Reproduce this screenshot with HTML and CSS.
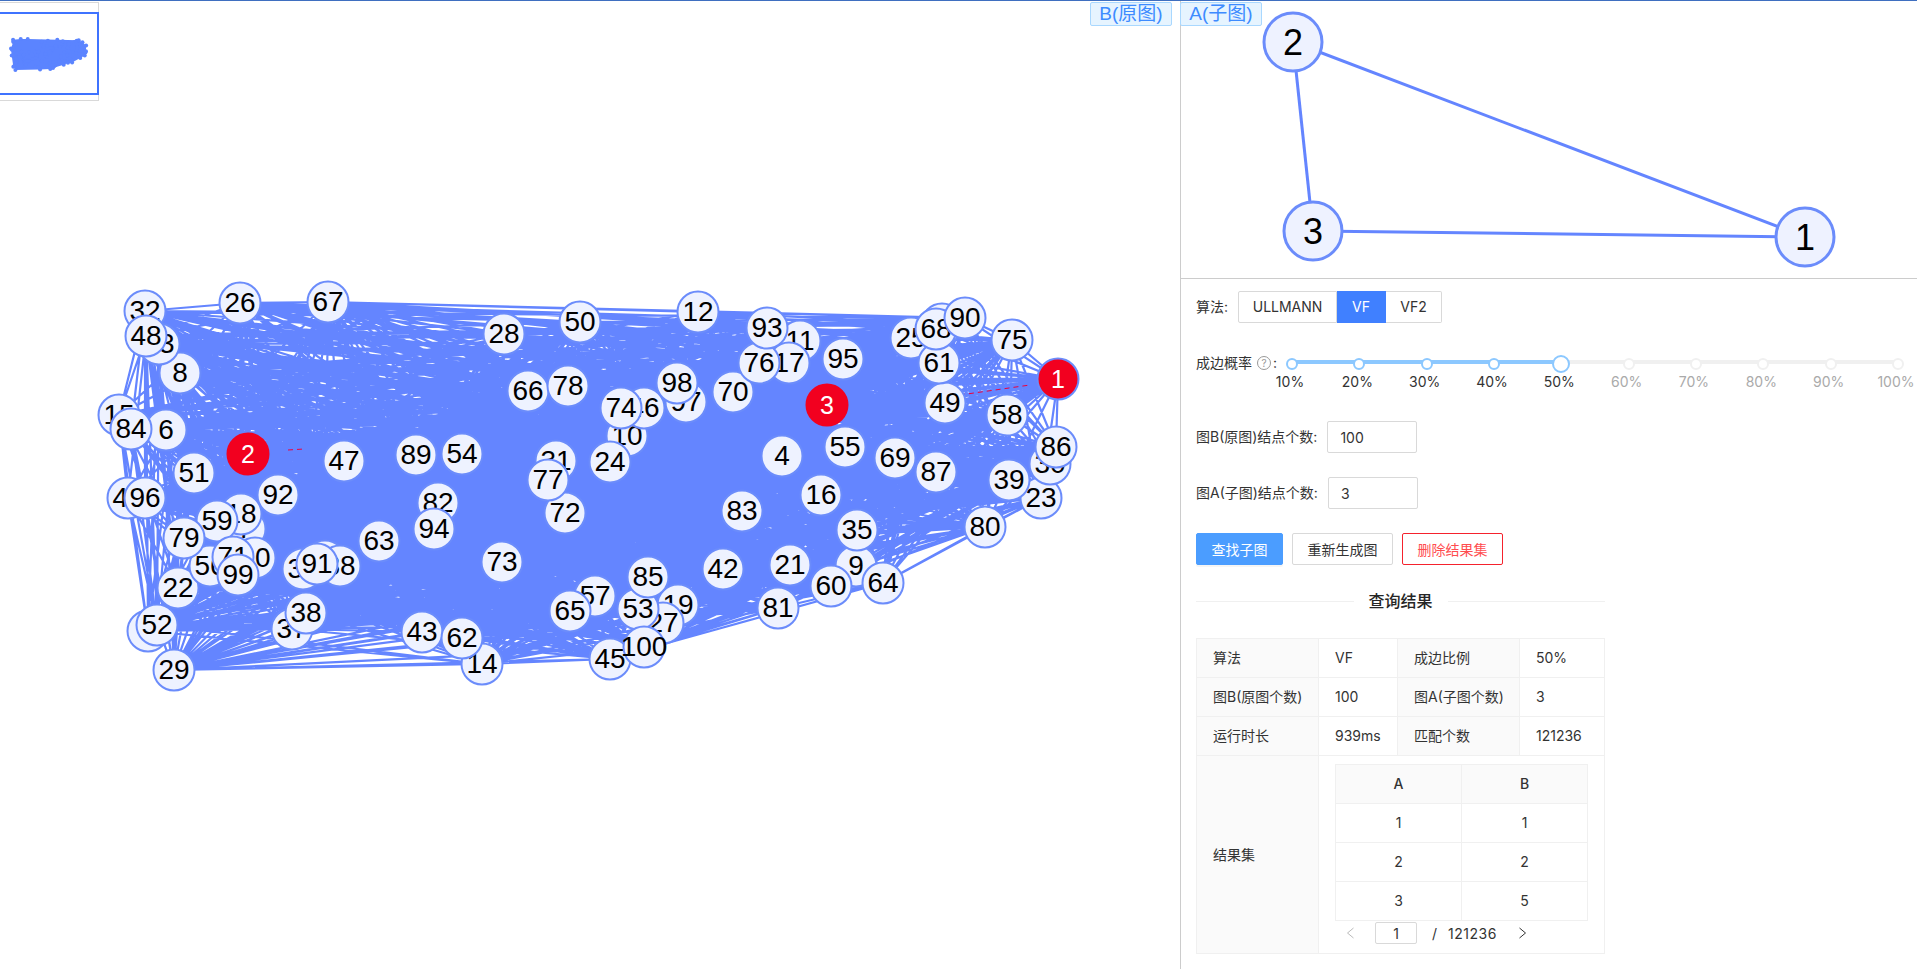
FILE: index.html
```html
<!DOCTYPE html>
<html lang="zh">
<head>
    <meta charset="UTF-8">
    <title>子图匹配</title>
    <link rel="stylesheet" href="styles.css">
</head>
<body>
    <div class="graph-pane">
        <div class="minimap">
            <svg id="minimapSvg" class="minimap-svg" width="98" height="98"></svg>
            <div class="minimap-view"></div>
        </div>
        <svg id="mainGraph" class="main-graph" width="1180" height="968"></svg>
        <div class="tabs">
            <span class="tab">B(原图)</span>
        </div>
    </div>
    <div class="side-pane">
        <div class="sub-graph">
            <span class="tab tab-sub">A(子图)</span>
            <svg class="sub-svg" width="736" height="277">
                <line class="sub-edge" x1="112" y1="41" x2="624" y2="236"/>
                <line class="sub-edge" x1="112" y1="41" x2="132" y2="230"/>
                <line class="sub-edge" x1="132" y1="230" x2="624" y2="236"/>
                <circle class="sub-node" cx="112" cy="41" r="29"/>
                <circle class="sub-node" cx="132" cy="230" r="29"/>
                <circle class="sub-node" cx="624" cy="236" r="29"/>
                <text class="sub-label" x="112" y="54">2</text>
                <text class="sub-label" x="132" y="243">3</text>
                <text class="sub-label" x="624" y="249">1</text>
            </svg>
        </div>
        <div class="form">
            <div class="form-row">
                <span class="form-label">算法:</span>
                <div class="radio-group">
                    <span class="radio radio-first">ULLMANN</span>
                    <span class="radio radio-on">VF</span>
                    <span class="radio radio-last">VF2</span>
                </div>
            </div>
            <div class="slider-row">
                <span class="form-label slider-label">成边概率<i class="help">?</i>:</span>
                <div class="slider">
                    <div class="track">
                        <div class="track-fill"></div>
                        <div class="dots">
                            <b class="dot dot-on"></b><b class="dot dot-on"></b><b class="dot dot-on"></b><b class="dot dot-on"></b>
                            <b class="dot dot-on dot-handle"></b>
                            <b class="dot"></b><b class="dot"></b><b class="dot"></b><b class="dot"></b><b class="dot"></b>
                        </div>
                    </div>
                    <div class="marks">
                        <span class="mark mark-on">10%</span>
                        <span class="mark mark-on">20%</span>
                        <span class="mark mark-on">30%</span>
                        <span class="mark mark-on">40%</span>
                        <span class="mark mark-on">50%</span>
                        <span class="mark">60%</span>
                        <span class="mark">70%</span>
                        <span class="mark">80%</span>
                        <span class="mark">90%</span>
                        <span class="mark">100%</span>
                    </div>
                </div>
            </div>
            <div class="form-row row-b">
                <label class="form-label" for="countB">图B(原图)结点个数:</label>
                <input class="num-input" id="countB" type="text" value="100">
            </div>
            <div class="form-row row-a">
                <label class="form-label" for="countA">图A(子图)结点个数:</label>
                <input class="num-input" id="countA" type="text" value="3">
            </div>
            <div class="buttons">
                <button class="btn btn-primary">查找子图</button>
                <button class="btn">重新生成图</button>
                <button class="btn btn-danger">删除结果集</button>
            </div>
            <div class="divider"><span>查询结果</span></div>
            <table class="result">
                <colgroup>
                    <col class="col-key"><col class="col-val"><col class="col-key"><col class="col-last">
                </colgroup>
                <tr><th>算法</th><td>VF</td><th>成边比例</th><td>50%</td></tr>
                <tr><th>图B(原图个数)</th><td>100</td><th>图A(子图个数)</th><td>3</td></tr>
                <tr><th>运行时长</th><td>939ms</td><th>匹配个数</th><td>121236</td></tr>
                <tr>
                    <th>结果集</th>
                    <td colspan="3" class="set-cell">
                        <table class="pairs">
                            <tr><th>A</th><th>B</th></tr>
                            <tr><td>1</td><td>1</td></tr>
                            <tr><td>2</td><td>2</td></tr>
                            <tr><td>3</td><td>5</td></tr>
                        </table>
                        <div class="pager">
                            <svg class="pager-prev" width="9" height="12" viewBox="0 0 9 12"><path d="M7.5 1L1.5 6l6 5"/></svg>
                            <input class="pager-input" type="text" value="1">
                            <span class="pager-slash">/</span>
                            <span class="pager-total">121236</span>
                            <svg class="pager-next" width="9" height="12" viewBox="0 0 9 12"><path d="M1.5 1l6 5-6 5"/></svg>
                        </div>
                    </td>
                </tr>
            </table>
        </div>
    </div>
    <script src="app.js"></script>
</body>
</html>
```
FILE: styles.css
```css
* {
    box-sizing: border-box;
}
html, body {
    height: 100%;
}
body {
    margin: 0;
    display: flex;
    overflow: hidden;
    border-top: 1px solid #3f6fc0;
    font-family: Inter, "Noto Sans CJK SC", sans-serif;
    font-size: 14px;
    color: #333;
    background: #fff;
}
.graph-pane {
    position: relative;
    flex: 0 0 1181px;
    border-right: 1px solid #ccc;
}
.main-graph {
    display: block;
}
.edges {
    fill: none;
    stroke: #6485ff;
    stroke-width: 2.2;
}
.red-edges {
    fill: none;
    stroke: #f0003c;
    stroke-width: 1;
    stroke-dasharray: 5 4;
}
.node {
    fill: #eef2ff;
    stroke: #6b8cfb;
    stroke-width: 2;
}
.node-hit {
    fill: #f2001f;
    stroke: #f2001f;
}
.node-first {
    stroke: #6b8cfb;
}
.node-text {
    font-family: "Liberation Sans", Arial, sans-serif;
    font-size: 28px;
    text-anchor: middle;
    fill: #000;
}
.node-text-hit {
    font-size: 25px;
    fill: #fff;
}
.minimap {
    position: absolute;
    left: 0;
    top: 1px;
    width: 99px;
    height: 99px;
    border: 1px solid #d9d9d9;
    border-left: none;
}
.minimap-svg {
    display: block;
}
.minimap-view {
    position: absolute;
    left: 0;
    top: 9px;
    width: 99px;
    height: 83px;
    border: 2px solid #3f73ff;
    border-left: none;
}
.mini-blob {
    fill: #5b84ff;
}
.mini-dot {
    fill: #5b84ff;
}
.tabs {
    position: absolute;
    right: 8px;
    top: 1px;
}
.tab {
    display: block;
    width: 82px;
    height: 24px;
    line-height: 22px;
    text-align: center;
    font-size: 19px;
    color: #3d8bff;
    background: #e6f4ff;
    border: 1px solid #a9d8ff;
    border-radius: 2px;
    font-family: "Liberation Sans", "Noto Sans CJK SC", sans-serif;
    white-space: nowrap;
}
.side-pane {
    flex: 1;
    min-width: 0;
}
.sub-graph {
    position: relative;
    height: 278px;
    border-bottom: 1px solid #ccc;
}
.tab-sub {
    position: absolute;
    left: -1px;
    top: 1px;
}
.sub-svg {
    display: block;
}
.sub-edge {
    stroke: #6485ff;
    stroke-width: 3;
}
.sub-node {
    fill: #eef2ff;
    stroke: #6b8cfb;
    stroke-width: 3;
}
.sub-label {
    font-family: "Liberation Sans", Arial, sans-serif;
    font-size: 36px;
    text-anchor: middle;
    fill: #000;
}
.form {
    padding: 12px 0 0 15px;
}
.form-row {
    display: flex;
    align-items: center;
}
.form-label {
    line-height: 20px;
    white-space: nowrap;
}
.radio-group {
    display: flex;
    margin-left: 10px;
    height: 32px;
    line-height: 30px;
}
.radio {
    padding: 0 15px;
    border: 1px solid #d9d9d9;
    border-left: none;
    white-space: nowrap;
}
.radio-first {
    width: 99px;
    border-left: 1px solid #d9d9d9;
    border-radius: 2px 0 0 2px;
    text-align: center;
    padding: 0;
}
.radio-on {
    width: 49px;
    padding: 0;
    text-align: center;
    color: #fff;
    background: #4080ff;
    border-color: #4080ff;
}
.radio-last {
    width: 56px;
    padding: 0;
    text-align: center;
    border-radius: 0 2px 2px 0;
}
.slider-row {
    display: flex;
    margin-top: 30px;
}
.slider-label {
    width: 94px;
}
.help {
    display: inline-block;
    width: 14px;
    height: 14px;
    margin: 0 2px 0 5px;
    border: 1px solid #999;
    border-radius: 50%;
    color: #999;
    font-size: 10px;
    line-height: 12px;
    text-align: center;
    font-style: normal;
    vertical-align: 1px;
}
.slider {
    width: 606px;
}
.track {
    position: relative;
    height: 4px;
    margin-top: 7px;
    background: #f0f0f0;
    border-radius: 2px;
}
.track-fill {
    width: 269px;
    height: 4px;
    background: #8cc8ff;
    border-radius: 2px;
}
.dots {
    position: absolute;
    left: 0;
    right: 0;
    top: 2px;
    display: flex;
    justify-content: space-between;
    align-items: center;
    height: 0;
}
.dot {
    flex: 0 0 0;
    position: relative;
}
.dot::after {
    content: "";
    position: absolute;
    left: -4px;
    top: -4px;
    width: 8px;
    height: 8px;
    background: #fff;
    border: 2px solid #f0f0f0;
    border-radius: 50%;
}
.dot-on::after {
    border-color: #8cc8ff;
}
.dot-handle::after {
    left: -7px;
    top: -7px;
    width: 14px;
    height: 14px;
}
.marks {
    display: flex;
    justify-content: space-between;
    margin-top: 8px;
}
.mark {
    flex: 0 0 0;
    width: 0;
    min-width: 0;
    display: flex;
    justify-content: center;
    line-height: 20px;
    white-space: nowrap;
    color: #aaa;
}
.mark-on {
    color: #333;
}
.row-b {
    margin-top: 29px;
}
.row-a {
    margin-top: 24px;
}
.num-input {
    width: 90px;
    height: 32px;
    margin-left: 10px;
    padding: 0 12px;
    border: 1px solid #d9d9d9;
    border-radius: 2px;
    font: inherit;
    color: #333;
}
.buttons {
    display: flex;
    gap: 9px;
    margin-top: 24px;
}
.btn {
    width: 101px;
    height: 32px;
    padding: 0;
    border: 1px solid #d9d9d9;
    border-radius: 2px;
    background: #fff;
    font: inherit;
    color: #333;
}
.btn-primary {
    width: 87px;
    color: #fff;
    background: #4b9dff;
    border-color: #4b9dff;
    box-shadow: 0 2px 0 rgba(0, 0, 0, 0.04);
}
.btn-danger {
    color: #ff4d4f;
    border-color: #f5222d;
}
.divider {
    display: flex;
    align-items: center;
    width: 409px;
    margin-top: 24px;
    font-size: 16px;
    font-weight: 500;
    line-height: 24px;
    color: #262626;
}
.divider::before, .divider::after {
    content: "";
    flex: 1;
    border-top: 1px solid #f0f0f0;
}
.divider span {
    padding: 0 15px;
}
.result {
    width: 408px;
    margin-top: 25px;
    border-collapse: collapse;
    table-layout: fixed;
}
.col-key {
    width: 122px;
}
.col-val {
    width: 79px;
}
.col-last {
    width: 85px;
}
.result th, .result td {
    height: 39px;
    padding: 0 0 2px 16px;
    border: 1px solid #f0f0f0;
    font-weight: 400;
    text-align: left;
    white-space: nowrap;
}
.result > tbody > tr > th {
    background: #fafafa;
}
.result .set-cell {
    padding: 8px 16px 9px 16px;
}
.pairs {
    width: 253px;
    border-collapse: collapse;
    table-layout: fixed;
}
.result .pairs th, .result .pairs td {
    padding: 0 0 2px;
    text-align: center;
}
.result .pairs th {
    background: #fafafa;
    font-weight: 500;
}
.pager {
    display: flex;
    align-items: center;
    height: 22px;
    margin-top: 1px;
}
.pager svg {
    fill: none;
    stroke-width: 1;
}
.pager-prev {
    margin: 0 20px 0 11px;
    stroke: #bbb;
}
.pager-input {
    width: 42px;
    height: 22px;
    padding: 0;
    border: 1px solid #d9d9d9;
    border-radius: 2px;
    font: inherit;
    text-align: center;
    color: #333;
}
.pager-slash {
    margin-left: 15px;
}
.pager-total {
    margin-left: 11px;
    letter-spacing: 0.5px;
}
.pager-next {
    margin-left: 21px;
    stroke: #333;
}
```
FILE: app.js
```js
// label, x, y of every node in graph B
const nodes = [
    [1,1058,378],[2,248,453],[3,827,404],[4,782,455],[5,148,630],[6,166,429],[7,245,528],[8,180,372],
    [9,856,565],[10,627,435],[11,800,340],[12,698,311],[14,482,663],[15,119,414],[16,821,494],[17,789,362],
    [18,241,513],[19,678,604],[20,255,557],[21,790,564],[22,178,587],[23,1041,497],[24,610,461],[25,911,337],
    [26,240,302],[27,663,622],[28,504,333],[29,174,669],[30,1050,463],[31,556,460],[32,145,310],[33,159,343],
    [34,325,560],[35,857,529],[36,303,568],[37,292,628],[38,306,612],[39,1009,479],[40,128,497],[41,942,323],
    [42,723,568],[43,422,631],[45,610,658],[46,644,407],[47,344,460],[48,146,335],[49,945,402],[50,580,321],
    [51,194,472],[52,157,624],[53,638,608],[54,462,453],[55,845,446],[56,210,565],[57,595,595],[58,1007,414],
    [59,217,520],[60,831,585],[61,939,362],[62,462,637],[63,379,540],[64,883,582],[65,570,610],[66,528,390],
    [67,328,301],[68,936,328],[69,895,457],[70,733,391],[71,233,556],[72,565,512],[73,502,561],[74,621,407],
    [75,1012,339],[76,759,362],[77,548,479],[78,568,385],[79,184,537],[80,985,526],[81,778,607],[82,438,502],
    [83,742,510],[84,131,428],[85,648,576],[86,1056,446],[87,936,471],[88,340,565],[89,416,454],[90,965,317],
    [91,317,563],[92,278,494],[93,767,327],[94,434,528],[95,843,358],[96,145,497],[97,686,401],[98,677,382],
    [99,238,574],[100,644,646]
];
const hull = [32,26,67,12,90,75,1,86,23,80,64,60,81,100,45,14,29,52,5,40,15,48,32];
const hits = [1, 2, 3];
const NS = 'http://www.w3.org/2000/svg';

function el(parent, tag, attrs, text) {
    const node = document.createElementNS(NS, tag);
    for (const key in attrs) node.setAttribute(key, attrs[key]);
    if (text !== undefined) node.textContent = text;
    parent.appendChild(node);
    return node;
}

function byLabel(label) {
    return nodes.find(n => n[0] === label);
}

function drawMain() {
    const svg = document.getElementById('mainGraph');
    let seed = 12345;
    const rand = () => {
        seed = (seed * 1103515245 + 12345) % 2147483648;
        return seed / 2147483648;
    };

    let d = '';
    for (let i = 0; i < nodes.length; i++) {
        for (let j = i + 1; j < nodes.length; j++) {
            if (rand() < 0.5) {
                d += `M${nodes[i][1]} ${nodes[i][2]}L${nodes[j][1]} ${nodes[j][2]}`;
            }
        }
    }
    for (let i = 1; i < hull.length; i++) {
        const a = byLabel(hull[i - 1]);
        const b = byLabel(hull[i]);
        d += `M${a[1]} ${a[2]}L${b[1]} ${b[2]}`;
    }
    el(svg, 'path', { class: 'edges', d: d });

    // only a few bits of the matched edges show through
    el(svg, 'path', { class: 'red-edges', d: 'M960 394L1030 384M288 449L304 448' });

    nodes.forEach(n => {
        const hit = hits.includes(n[0]);
        let cls = hit ? 'node node-hit' : 'node';
        if (n[0] === 1) cls += ' node-first';
        el(svg, 'circle', { class: cls, cx: n[1], cy: n[2], r: 20.5 });
        el(svg, 'text', {
            class: hit ? 'node-text node-text-hit' : 'node-text',
            x: n[1],
            y: n[2] + 9
        }, n[0]);
    });
}

function drawMinimap() {
    const svg = document.getElementById('minimapSvg');
    const mx = x => (x - 119) * 0.08 + 11;
    const my = y => (y - 301) * 0.084 + 36;
    const points = hull.map(l => {
        const n = byLabel(l);
        return mx(n[1]).toFixed(1) + ',' + my(n[2]).toFixed(1);
    });
    el(svg, 'polygon', { class: 'mini-blob', points: points.join(' ') });
    nodes.forEach(n => {
        el(svg, 'circle', { class: 'mini-dot', cx: mx(n[1]), cy: my(n[2]), r: 2 });
    });
}

drawMain();
drawMinimap();
```
